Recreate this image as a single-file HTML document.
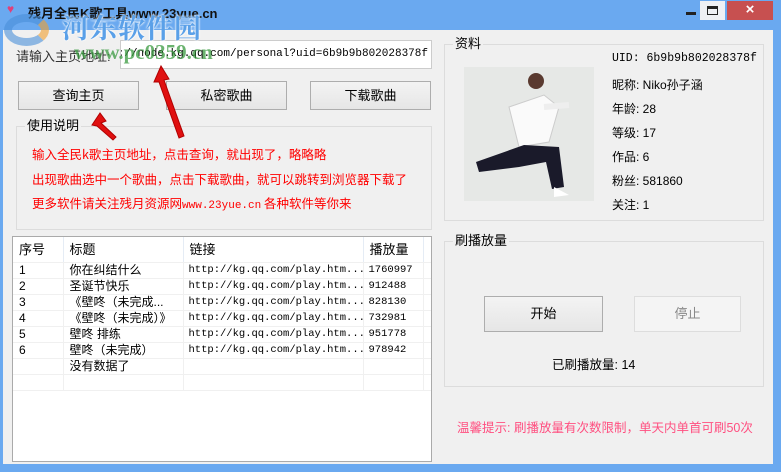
<!DOCTYPE html>
<html><head><meta charset="utf-8"><style>
*{margin:0;padding:0;box-sizing:border-box}
body{width:781px;height:472px;background:#6aa9f0;position:relative;overflow:hidden;font-family:"Liberation Sans","Noto Sans CJK SC",sans-serif;font-size:12px;color:#000}
.abs{position:absolute}
.client{position:absolute;left:3px;top:30px;width:770px;height:434px;background:#f0f0f0}
.btn{position:absolute;border:1px solid #adadad;background:linear-gradient(#f3f3f3,#e6e6e6);text-align:center;font-size:13px}
.grp{position:absolute;border:1px solid #dcdcdc}
.gt{position:absolute;background:#f0f0f0;padding:0 2px;font-size:13px;top:-10px;left:8px;line-height:18px}
.red{position:absolute;left:32px;color:#f00;font-size:12.5px;font-family:"Noto Sans CJK SC",sans-serif}
.mono{font-family:"Liberation Mono","Noto Sans CJK SC",monospace}
table{border-collapse:collapse;font-size:12px;table-layout:fixed;width:418px}
td{height:16px;line-height:15px;padding-left:6px;border-bottom:1px solid #f0f0f0;border-right:1px solid #f0f0f0;white-space:nowrap;overflow:hidden}
td.l{font-size:10.5px;padding-left:5px}
.info{position:absolute;left:612px;font-size:12px}
</style></head><body>
<div class="abs" style="left:7px;top:4px;width:13px;height:11px;color:#e0407a;font-size:12px;line-height:11px">♥</div>
<div class="abs" style="left:28px;top:3px;font-size:13px;font-weight:bold;color:#111">残月全民K歌工具www.23yue.cn</div>
<div class="abs" style="left:686px;top:12px;width:10px;height:3px;background:#222"></div>
<div class="abs" style="left:700px;top:1px;width:25px;height:19px;background:#eef0f4"></div>
<div class="abs" style="left:707px;top:6px;width:11px;height:9px;border:1px solid #222;border-top-width:3px"></div>
<div class="abs" style="left:727px;top:1px;width:46px;height:19px;background:#c75050;color:#fff;text-align:center;font-size:15px;line-height:18px;font-weight:bold">×</div>
<div class="client"></div>

<div class="abs" style="left:16px;top:46px;font-size:13px;color:#333">请输入主页地址:</div>
<div class="abs mono" style="left:120px;top:40px;width:312px;height:29px;background:#fff;border:1px solid #ccc;font-size:11px;line-height:27px;padding-right:3px;white-space:nowrap;overflow:hidden;display:flex;justify-content:flex-end">https://node.kg.qq.com/personal?uid=6b9b9b802028378f</div>
<div class="btn" style="left:18px;top:81px;width:121px;height:29px;line-height:27px">查询主页</div>
<div class="btn" style="left:166px;top:81px;width:121px;height:29px;line-height:27px">私密歌曲</div>
<div class="btn" style="left:310px;top:81px;width:121px;height:29px;line-height:27px">下载歌曲</div>

<!-- watermark -->
<div class="abs" style="left:4px;top:14px;width:45px;height:32px;border-radius:50%;border:8px solid #4a90d9;border-right-color:#f0a030;opacity:.6"></div>
<div class="abs" style="left:62px;top:12px;font-size:27px;line-height:30px;font-weight:bold;color:#5aa0e8;letter-spacing:1px;font-family:'Noto Serif CJK SC',serif;text-shadow:0 0 2px #fff,0 0 2px #fff">河东软件园</div>
<div class="abs" style="left:74px;top:40px;font-size:21px;line-height:24px;font-weight:bold;color:#3a9a40;opacity:.75;font-family:'Liberation Serif',serif">www.pc0359.cn</div>

<div class="grp" style="left:16px;top:126px;width:416px;height:104px"><div class="gt">使用说明</div></div>
<div class="red" style="top:144px">输入全民k歌主页地址，点击查询，就出现了，略略略</div>
<div class="red" style="top:169px">出现歌曲选中一个歌曲，点击下载歌曲，就可以跳转到浏览器下载了</div>
<div class="red" style="top:193px">更多软件请关注残月资源网<span class="mono" style="font-size:11px">www.23yue.cn</span> 各种软件等你来</div>

<div class="abs" style="left:12px;top:236px;width:420px;height:226px;background:#fff;border:1px solid #aaa;overflow:hidden">
<table>
<colgroup><col style="width:50px"><col style="width:120px"><col style="width:180px"><col style="width:60px"><col style="width:8px"></colgroup>
<tr><td style="height:25px;font-size:13px;border-right:1px solid #e5ecf5">序号</td><td style="font-size:13px;border-right:1px solid #e5ecf5">标题</td><td style="font-size:13px;border-right:1px solid #e5ecf5">链接</td><td style="font-size:13px;border-right:1px solid #e5ecf5">播放量</td><td></td></tr>
<tr><td>1</td><td>你在纠结什么</td><td class="mono l">http://kg.qq.com/play.htm...</td><td class="mono l">1760997</td><td></td></tr>
<tr><td>2</td><td>圣诞节快乐</td><td class="mono l">http://kg.qq.com/play.htm...</td><td class="mono l">912488</td><td></td></tr>
<tr><td>3</td><td>《壁咚（未完成...</td><td class="mono l">http://kg.qq.com/play.htm...</td><td class="mono l">828130</td><td></td></tr>
<tr><td>4</td><td>《壁咚（未完成）》</td><td class="mono l">http://kg.qq.com/play.htm...</td><td class="mono l">732981</td><td></td></tr>
<tr><td>5</td><td>壁咚 排练</td><td class="mono l">http://kg.qq.com/play.htm...</td><td class="mono l">951778</td><td></td></tr>
<tr><td>6</td><td>壁咚（未完成）</td><td class="mono l">http://kg.qq.com/play.htm...</td><td class="mono l">978942</td><td></td></tr>
<tr><td></td><td>没有数据了</td><td></td><td></td><td></td></tr>
<tr><td></td><td></td><td></td><td></td><td></td></tr>
</table></div>

<div class="grp" style="left:444px;top:44px;width:320px;height:177px"><div class="gt">资料</div></div>
<div class="abs" style="left:464px;top:67px;width:130px;height:134px;background:#e6e8e6;overflow:hidden">
<svg width="130" height="134"><circle cx="72" cy="14" r="8" fill="#5a3a30"/><path d="M45 40 L80 28 L95 40 L85 75 L55 80 Z" fill="#fafafa" stroke="#ccc"/><path d="M60 78 L95 80 L100 120 L88 122 L82 95 L55 100 L15 105 L12 95 Z" fill="#1a1a2a"/><path d="M90 120 L105 128 L90 130Z" fill="#fff"/><path d="M80 40 L105 38" stroke="#eee" stroke-width="6"/></svg></div>
<div class="info mono" style="top:52px;font-size:11.5px">UID: 6b9b9b802028378f</div>
<div class="info" style="top:76px">昵称: Niko孙子涵</div>
<div class="info" style="top:100px">年龄: 28</div>
<div class="info" style="top:124px">等级: 17</div>
<div class="info" style="top:148px">作品: 6</div>
<div class="info" style="top:172px">粉丝: 581860</div>
<div class="info" style="top:196px">关注: 1</div>

<div class="grp" style="left:444px;top:241px;width:320px;height:146px"><div class="gt">刷播放量</div></div>
<div class="btn" style="left:484px;top:296px;width:119px;height:36px;line-height:34px">开始</div>
<div class="btn" style="left:634px;top:296px;width:107px;height:36px;line-height:34px;color:#888;border-color:#ddd;background:#f4f4f4">停止</div>
<div class="abs" style="left:552px;top:354px;font-size:12.5px">已刷播放量: 14</div>
<div class="abs" style="left:457px;top:417px;font-size:12.5px;color:#ff4f80">温馨提示: 刷播放量有次数限制，单天内单首可刷50次</div>

<svg class="abs" style="left:0;top:0" width="781" height="472">
<g fill="#e01010" stroke="#b00000" stroke-width="1">
<path d="M100 113 L92 125 L97 126 L113 140 L116 137 L101 123 L106 121 Z"/>
<path d="M161 66 L154 82 L159 82 L179 138 L184 136 L164 80 L169 79 Z"/>
</g></svg>
</body></html>
